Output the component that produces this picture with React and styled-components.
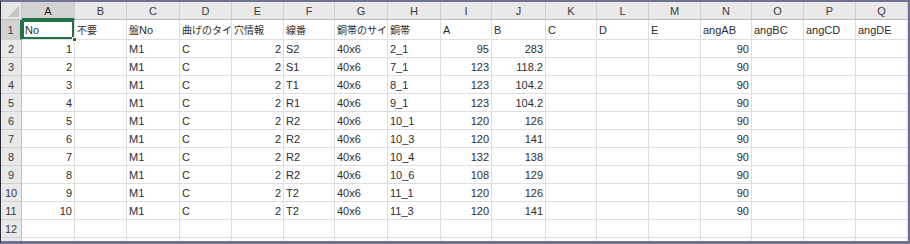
import React from 'react'
import styled, {createGlobalStyle} from 'styled-components'

const GlobalStyle = createGlobalStyle`
    html, body {
        margin: 0;
        padding: 0;
        background: #fff;
    }
`

const colLetters = ['A','B','C','D','E','F','G','H','I','J','K','L','M','N','O','P','Q']
const colWidths = [53,52,53,52,52,51,53,53,51,54,51,52,52,51,52,52,52]

const headRow = ['No','不要','盤No','曲げのタイプ','穴情報','線番','銅帯のサイズ','銅帯','A','B','C','D','E','angAB','angBC','angCD','angDE']

const raw = [
    [1,'S2','2_1',95,283],
    [2,'S1','7_1',123,118.2],
    [3,'T1','8_1',123,104.2],
    [4,'R1','9_1',123,104.2],
    [5,'R2','10_1',120,126],
    [6,'R2','10_3',120,141],
    [7,'R2','10_4',132,138],
    [8,'R2','10_6',108,129],
    [9,'T2','11_1',120,126],
    [10,'T2','11_3',120,141],
]

const dataRows = raw.map(([no, wire, band, a, b]) => [
    no, '', 'M1', 'C', 2, wire, '40x6', band, a, b, '', '', '', 90, '', '', ''
])

const Frame = styled.div`
    width: 910px;
    height: 244px;
    box-sizing: border-box;
    border-top: 2px solid #6f7290;
    border-right: 2px solid #6f7290;
    border-bottom: 3px solid #6f7290;
    border-left: 1px solid #2b2e3c;
    overflow: hidden;
    font-family: "Liberation Sans", "Noto Sans CJK JP", sans-serif;
    font-size: 11px;
    color: #2e2e2e;
`

const Sheet = styled.div`
    display: grid;
    grid-template-columns: 21px ${colWidths.map(w => w + 'px').join(' ')};
    grid-template-rows: 18px 20px repeat(12, 18px);
`

const Corner = styled.div`
    background: #e6e6e6;
    border-right: 1px solid #c9c9c9;
    border-bottom: 1px solid #bdbdbd;
    position: relative;
    &::after {
        content: '';
        position: absolute;
        right: 2px;
        bottom: 2px;
        width: 0;
        height: 0;
        border-left: 11px solid transparent;
        border-bottom: 11px solid #c4c4c4;
    }
`

const ColHead = styled.div`
    background: ${p => p.$active ? '#d3d3d3' : '#e9e9e9'};
    border-right: 1px solid #d0d0d0;
    border-bottom: ${p => p.$active ? '2px solid #217346' : '1px solid #bdbdbd'};
    display: flex;
    align-items: center;
    justify-content: center;
    color: ${p => p.$active ? '#1f1f1f' : '#3b3b3b'};
    font-size: 11px;
    padding-top: ${p => p.$active ? '1px' : '0'};
`

const RowHead = styled.div`
    background: ${p => p.$active ? '#d3d3d3' : '#e9e9e9'};
    border-right: ${p => p.$active ? '2px solid #217346' : '1px solid #bdbdbd'};
    border-bottom: 1px solid #d0d0d0;
    display: flex;
    align-items: center;
    justify-content: center;
    color: #3b3b3b;
    font-size: 11px;
`

const Cell = styled.div`
    border-right: 1px solid #dedede;
    border-bottom: 1px solid #dedede;
    display: flex;
    align-items: center;
    justify-content: ${p => p.$num ? 'flex-end' : 'flex-start'};
    padding: 0 2px;
    white-space: nowrap;
    overflow: hidden;
    min-width: 0;
    position: relative;
`

const Selected = styled(Cell)`
    box-shadow: inset 0 0 0 2px #217346;
    padding-left: 3px;
    overflow: visible;
    &::after {
        content: '';
        position: absolute;
        right: -3px;
        bottom: -3px;
        width: 5px;
        height: 5px;
        background: #217346;
        border: 1px solid #fff;
        box-sizing: border-box;
        z-index: 2;
    }
`

// japanese glyphs render a bit narrower than the latin ones in the sheet
const Jp = styled.span`
    font-size: 10px;
`

const renderText = v => {
    if (typeof v !== 'string') return v
    return v.split(/([^\x00-\x7f]+)/).map((part, i) =>
        /[^\x00-\x7f]/.test(part) ? <Jp key={i}>{part}</Jp> : part)
}

const App = () => {
    return (
        <Frame>
            <GlobalStyle />
            <Sheet>
                <Corner />
                {colLetters.map((l, i) => <ColHead key={l} $active={i === 0}>{l}</ColHead>)}

                <RowHead $active>1</RowHead>
                {headRow.map((t, i) => i === 0
                    ? <Selected key={i}>{t}</Selected>
                    : <Cell key={i}>{renderText(t)}</Cell>)}

                {dataRows.map((row, r) => (
                    <React.Fragment key={r}>
                        <RowHead>{r + 2}</RowHead>
                        {row.map((v, c) => <Cell key={c} $num={typeof v === 'number'}>{v}</Cell>)}
                    </React.Fragment>
                ))}

                {[12, 13].map(n => (
                    <React.Fragment key={n}>
                        <RowHead>{n === 12 ? n : ''}</RowHead>
                        {colLetters.map(l => <Cell key={l} />)}
                    </React.Fragment>
                ))}
            </Sheet>
        </Frame>
    )
}

export default App
